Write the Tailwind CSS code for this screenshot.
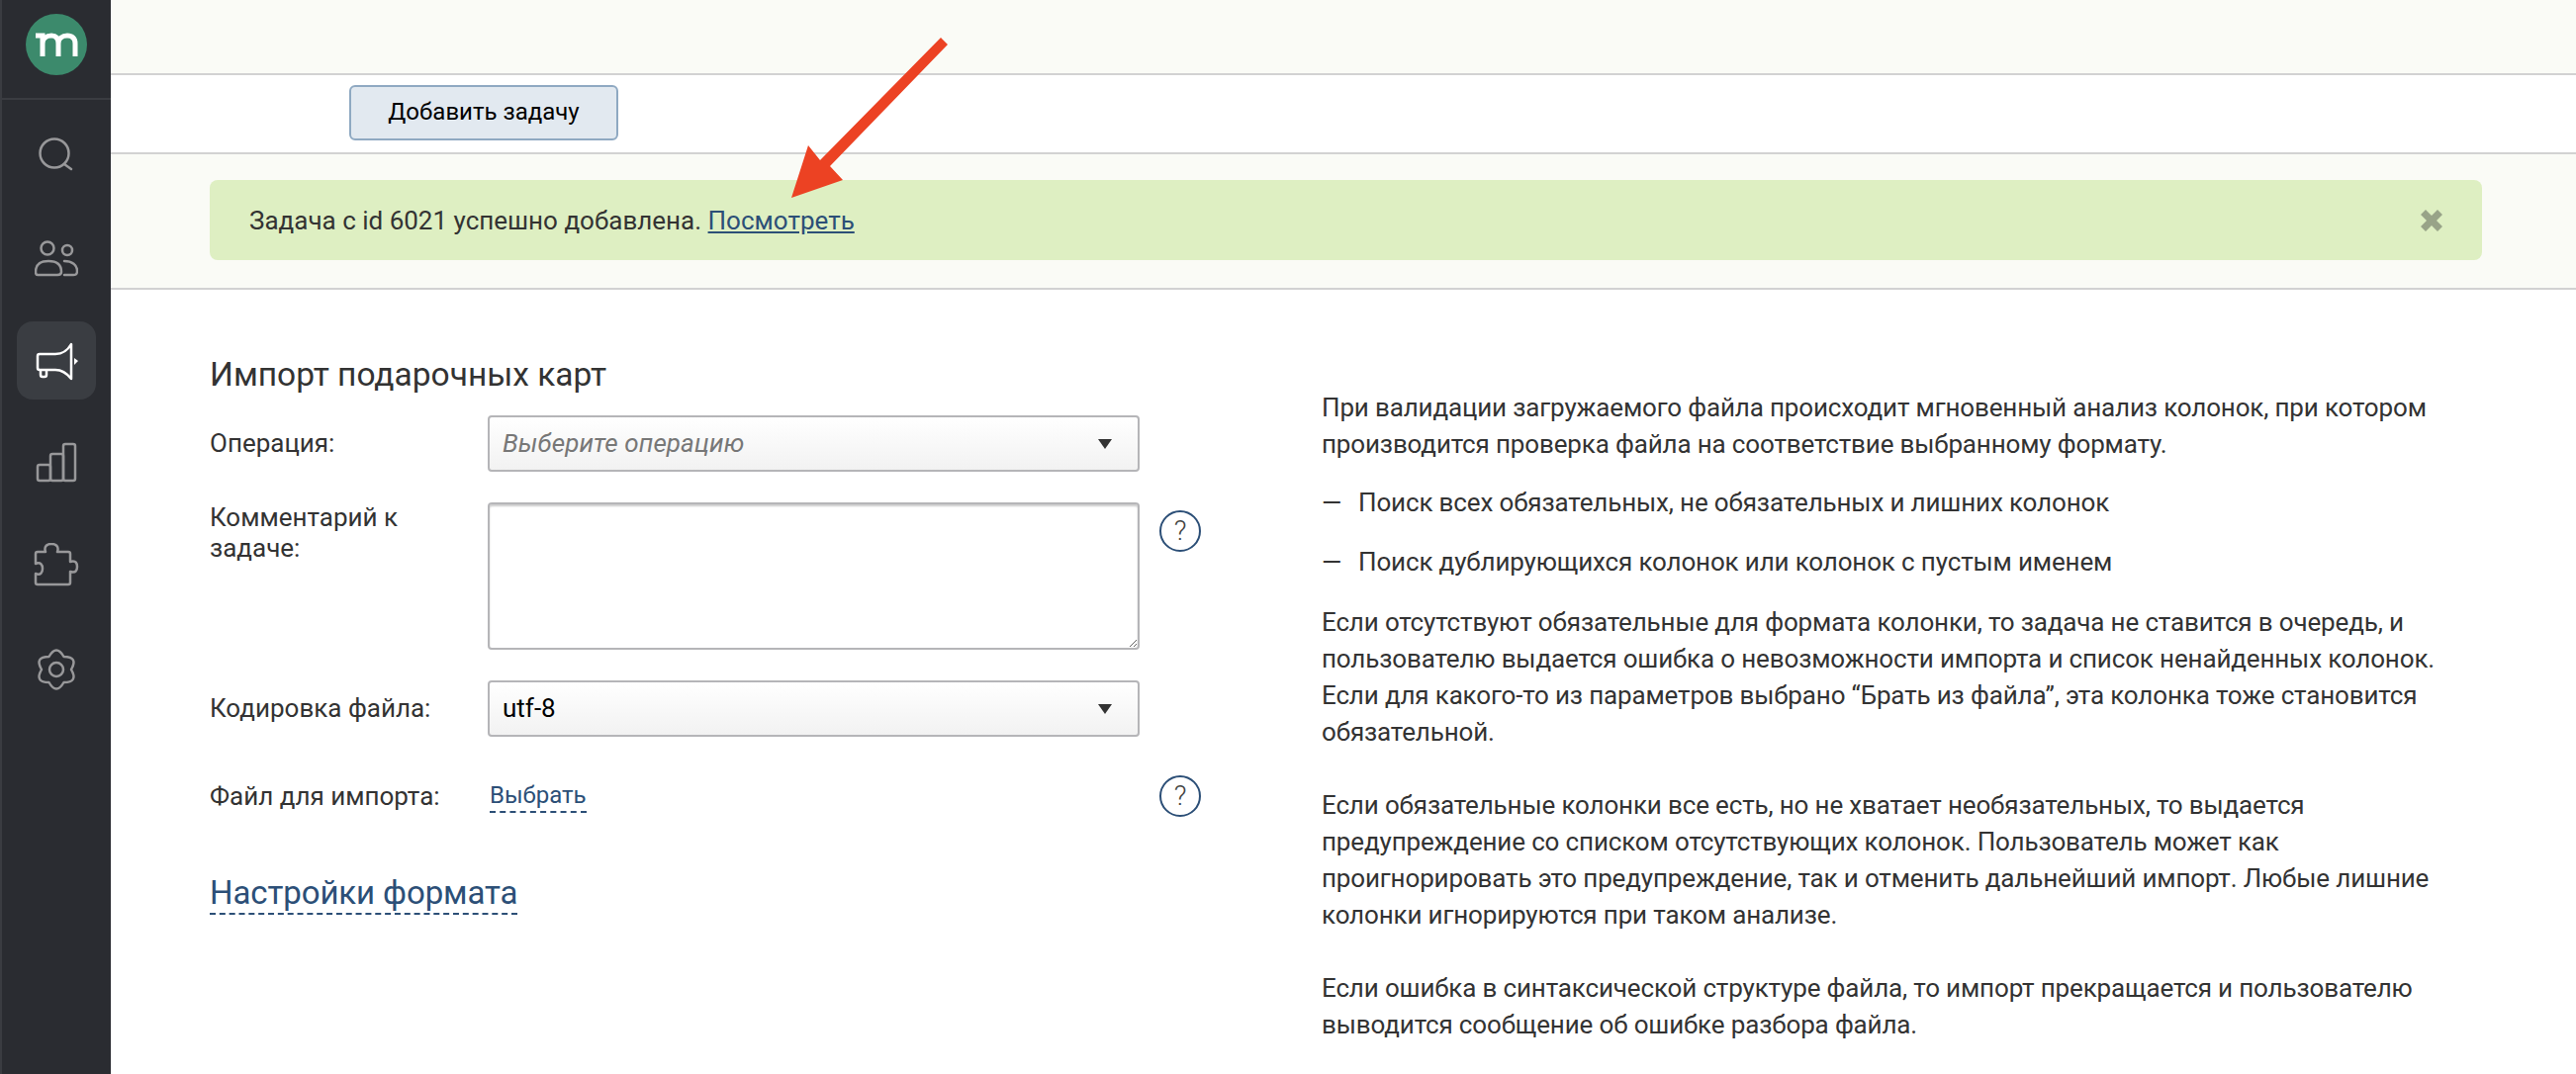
<!DOCTYPE html>
<html lang="ru">
  <head>
    <meta charset="UTF-8" />
    <title>Импорт подарочных карт</title>
    <script src="https://cdn.jsdelivr.net/npm/@tailwindcss/browser@4"></script>
  </head>
  <body class="relative h-[1086px] w-[2604px] overflow-hidden bg-white font-[family-name:Roboto,sans-serif] text-[26px] text-[#333]">
    <div class="flex h-full">
      <!-- sidebar -->
      <aside class="flex w-[112px] shrink-0 flex-col items-center border-l-2 border-[#3a3c41] bg-[#2a2c31]">
        <div class="flex h-[101px] w-full items-center justify-center border-b-2 border-[#3a3c41] pb-[9px]">
          <div class="flex h-[62px] w-[62px] items-center justify-center rounded-full bg-[#3c8a6c]">
            <svg width="46" height="30" viewBox="0 0 46 30" fill="none" stroke="#fff" stroke-width="5">
              <path d="M2 6h7v21M9 14c0-5 4-8 9-8s7 3 7 8v13M25 14c0-5 4-8 9-8s8 3 8 8v13" />
            </svg>
          </div>
        </div>
        <nav class="flex w-full flex-col items-center text-[#98989a]">
          <button class="mt-[33px] flex h-[44px] w-[80px] items-center justify-center">
            <svg width="44" height="44" viewBox="0 0 44 44" fill="none" stroke="currentColor" stroke-width="2.5" stroke-linecap="round">
              <circle cx="20" cy="21" r="14.5" /><path d="M30 32l7 5" />
            </svg>
          </button>
          <button class="mt-[61px] flex h-[44px] w-[80px] items-center justify-center">
            <svg width="44" height="44" viewBox="0 0 44 44" fill="none" stroke="currentColor" stroke-width="2.5" stroke-linecap="round">
              <circle cx="13" cy="12" r="6.5" /><circle cx="33" cy="14" r="5" />
              <path d="M3 39h20q4 0 4-3 0-11-13-11T1 36q0 3 2 3z" />
              <path d="M30 25c8 0 13 4 13 10 0 3-1 4-4 4h-9" />
            </svg>
          </button>
          <button class="mt-[42px] flex h-[79px] w-[80px] items-center justify-center rounded-[16px] bg-[#3a3d42] text-white">
            <svg width="44" height="44" viewBox="0 0 44 44" fill="none" stroke="currentColor" stroke-width="2.5" stroke-linejoin="round">
              <path d="M5 15h16c6 0 12-3 16-10v35c-4-5-10-9-16-9H5a2 2 0 0 1-2-2V17a2 2 0 0 1 2-2z" />
              <path d="M6 31v5a2 2 0 0 0 2 2h2a2 2 0 0 0 2-2v-5" />
              <path d="M40 19l4 3-4 4z" fill="currentColor" stroke="none" />
            </svg>
          </button>
          <button class="mt-[42px] flex h-[44px] w-[80px] items-center justify-center">
            <svg width="44" height="44" viewBox="0 0 44 44" fill="none" stroke="currentColor" stroke-width="2.5" stroke-linejoin="round">
              <rect x="3" y="24" width="13" height="16" rx="2" />
              <rect x="16" y="13" width="13" height="27" rx="2" />
              <rect x="29" y="3" width="12" height="37" rx="2" />
            </svg>
          </button>
          <button class="mt-[59px] flex h-[44px] w-[80px] items-center justify-center">
            <svg width="48" height="44" viewBox="0 0 48 44" fill="none" stroke="currentColor" stroke-width="2.5" stroke-linejoin="round">
              <path d="M5 9h8c-2-6 2-8 6-8s8 2 6 8h11a2 2 0 0 1 2 2v8c6-2 7 2 7 5s-1 7-7 5v11a2 2 0 0 1-2 2H5a2 2 0 0 1-2-2v-9c5 2 7-1 7-5s-2-7-7-5v-10a2 2 0 0 1 2-2z" />
            </svg>
          </button>
          <button class="mt-[62px] flex h-[44px] w-[80px] items-center justify-center">
            <svg width="44" height="44" viewBox="0 0 44 44" fill="none" stroke="currentColor" stroke-width="2.5" stroke-linejoin="round">
              <path d="M14.5 9Q22 -4 29.5 9Q44.5 9 37 22Q44.5 35 29.5 35Q22 48 14.5 35Q-.5 35 7 22Q-.5 9 14.5 9z" />
              <circle cx="22" cy="22" r="7" />
            </svg>
          </button>
        </nav>
      </aside>

      <main class="min-w-0 flex-1">
        <div class="h-[76px] border-b-2 border-[#d2d2d2] bg-[#fafbf6]"></div>
        <div class="flex h-[80px] items-center border-b-2 border-[#d2d2d2] pb-[2px] pl-[241px]">
          <button class="h-[56px] w-[272px] rounded-[6px] border-2 border-[#8fa9c2] bg-[#e2e9f0] pb-[2px] text-[24px] text-black">Добавить задачу</button>
        </div>
        <div class="h-[137px] border-b-2 border-[#d2d2d2] bg-[#fafbf6] px-[100px] pt-[26px]">
          <div class="flex h-[81px] w-[2297px] items-center justify-between rounded-[8px] bg-[#deefc2] pl-[40px] pr-[40px]">
            <p class="pt-[2px]">Задача с id 6021 успешно добавлена. <a href="#" class="text-[#2c4f77] underline">Посмотреть</a></p>
            <svg width="22" height="22" viewBox="0 0 22 22" fill="#98a388"><path d="M5 0l6 6 6-6 5 5-6 6 6 6-5 5-6-6-6 6-5-5 6-6-6-6z" /></svg>
          </div>
        </div>

        <div class="flex pl-[100px] pt-[66px]">
          <!-- form -->
          <section class="w-[1124px] shrink-0">
            <h1 class="text-[33.5px] leading-[40px]">Импорт подарочных карт</h1>
            <div class="mt-[21px] flex items-center">
              <label class="w-[281px] shrink-0">Операция:</label>
              <div class="flex h-[57px] w-[659px] items-center justify-between rounded-[4px] border-2 border-[#b5b5b8] bg-gradient-to-b from-white to-[#f2f2f2] pl-[13px] pr-[26px] italic tracking-[0.1px] text-[#777]">
                <span>Выберите операцию</span>
                <span class="h-0 w-0 border-x-[7px] border-t-[10px] border-x-transparent border-t-[#333]"></span>
              </div>
            </div>
            <div class="mt-[31px] flex">
              <label class="w-[281px] shrink-0 leading-[31px]">Комментарий к<br />задаче:</label>
              <textarea class="h-[149px] w-[659px] resize rounded-[4px] border-2 border-[#b5b5b8] bg-white shadow-[inset_0_2px_2px_#ccc]"></textarea>
              <a href="#" class="ml-[20px] mt-[8px] flex h-[42px] w-[42px] items-center justify-center rounded-full border-2 border-[#2c4f77] text-[28px] font-light text-[#444]">?</a>
            </div>
            <div class="mt-[31px] flex items-center">
              <label class="w-[281px] shrink-0">Кодировка файла:</label>
              <div class="flex h-[57px] w-[659px] items-center justify-between rounded-[4px] border-2 border-[#b5b5b8] bg-gradient-to-b from-white to-[#f2f2f2] pl-[13px] pr-[26px] text-black">
                <span>utf-8</span>
                <span class="h-0 w-0 border-x-[7px] border-t-[10px] border-x-transparent border-t-[#333]"></span>
              </div>
            </div>
            <div class="mt-[39px] flex h-[42px] items-center">
              <label class="w-[283px] shrink-0">Файл для импорта:</label>
              <a href="#" class="border-b-2 border-dashed border-[#2c4f77] text-[24px] leading-[32px] text-[#2c4f77]">Выбрать</a>
              <a href="#" class="ml-auto mr-[122px] flex h-[42px] w-[42px] items-center justify-center rounded-full border-2 border-[#2c4f77] text-[28px] font-light text-[#444]">?</a>
            </div>
            <a href="#" class="mt-[57px] inline-block border-b-2 border-dashed border-[#2c4f77] text-[33px] leading-[40px] tracking-[-0.1px] text-[#2c4f77]">Настройки формата</a>
          </section>

          <!-- description -->
          <section class="pt-[35px] leading-[37px] tracking-[-0.15px]">
            <p>При валидации загружаемого файла происходит мгновенный анализ колонок, при котором<br />производится проверка файла на соответствие выбранному формату.</p>
            <ul class="mt-[22px] flex flex-col gap-[23px]">
              <li class="flex"><span class="w-[37px]">—</span>Поиск всех обязательных, не обязательных и лишних колонок</li>
              <li class="flex"><span class="w-[37px]">—</span>Поиск дублирующихся колонок или колонок с пустым именем</li>
            </ul>
            <p class="mt-[24px]">Если отсутствуют обязательные для формата колонки, то задача не ставится в очередь, и<br />пользователю выдается ошибка о невозможности импорта и список ненайденных колонок.<br />Если для какого-то из параметров выбрано “Брать из файла”, эта колонка тоже становится<br />обязательной.<br /><br />Если обязательные колонки все есть, но не хватает необязательных, то выдается<br />предупреждение со списком отсутствующих колонок. Пользователь может как<br />проигнорировать это предупреждение, так и отменить дальнейший импорт. Любые лишние<br />колонки игнорируются при таком анализе.<br /><br />Если ошибка в синтаксической структуре файла, то импорт прекращается и пользователю<br />выводится сообщение об ошибке разбора файла.</p>
          </section>
        </div>
      </main>
    </div>

    <!-- annotation arrow over the page -->
    <svg class="pointer-events-none absolute left-0 top-0" width="2604" height="300" fill="#ec4223">
      <path d="M951 38L958 45L839 168L852 182L800 200L817 147L829 162z" />
    </svg>
  </body>
</html>
